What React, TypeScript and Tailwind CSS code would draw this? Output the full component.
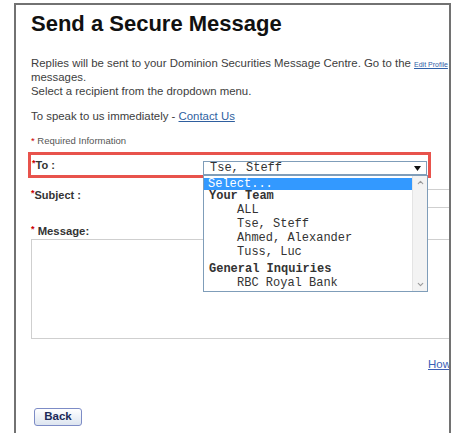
import { ChevronDown, ChevronUp } from 'lucide-react';

const teamMembers = ['ALL', 'Tse, Steff', 'Ahmed, Alexander', 'Tuss, Luc'];

const Required = () => <span className="text-[#cc0000] text-[9px] align-top leading-none">*</span>;

// open state of the "To" select, drawn as a native-looking listbox
const RecipientList = () => (
  <div className="absolute left-0 top-full z-10 w-[225px] h-[117px] border border-[#7f9db9] bg-white flex font-['Liberation_Mono',monospace] text-[12px] text-[#333]">
    <div className="flex-1 pt-[2px]">
      <div className="h-[12px] leading-[12px] bg-[#3399ff] text-white pl-[4px]">Select...</div>
      <div className="h-[13px] leading-[13px] pl-[5px] font-bold">Your Team</div>
      {teamMembers.map((name) => (
        <div key={name} className="h-[14px] leading-[14px] pl-[33px]">
          {name}
        </div>
      ))}
      <div className="h-[17px] leading-[13px] pt-[4px] pl-[5px] font-bold">General Inquiries</div>
      <div className="h-[14px] leading-[14px] pl-[33px]">RBC Royal Bank</div>
    </div>
    <div className="w-[15px] bg-[#f3f3f3] border-l border-[#e4e4e4] flex flex-col justify-between items-center py-[2px] text-[#9a9a9a]">
      <ChevronUp size={9} strokeWidth={3} />
      <ChevronDown size={9} strokeWidth={3} />
    </div>
  </div>
);

const App = () => {
  return (
    <div className="w-[458px] h-[433px] bg-white pl-[14px] pt-[3px] overflow-hidden font-['Liberation_Sans',Arial,sans-serif]">
      <div className="w-[437px] h-[430px] border-2 border-b-0 border-[#727272] overflow-hidden pl-[15px]">
        <div className="w-[520px]">
          <h1 className="mt-[6px] text-[22px] leading-[25px] font-bold text-[#111]">Send a Secure Message</h1>

          <div className="mt-[21px] text-[11.4px] leading-[12px] text-[#3d3d3d]">
            <p className="whitespace-nowrap">
              Replies will be sent to your Dominion Securities Message Centre. Go to the{' '}
              <a className="text-[7px] text-[#3060a8] underline">Edit Profile</a> page to set up notifications of new
            </p>
            <p>messages.</p>
            <p className="mt-[2px]">Select a recipient from the dropdown menu.</p>
            <p className="mt-[13px]">
              To speak to us immediately - <a className="text-[#2f5f9f] underline">Contact Us</a>
            </p>
          </div>

          <p className="mt-[13px] text-[9.5px] leading-[11px] text-[#555]">
            <span className="text-[#cc0000]">*</span> Required Information
          </p>

          <div className="mt-[6px] -ml-[3px] w-[403px] h-[26px] border-[3px] border-[#e8534c] flex">
            <div className="w-[172px] pl-[1px] pt-[4px] text-[11px] leading-[13px] font-bold text-[#333]">
              <Required />
              To :
            </div>
            <div className="relative mt-[6px] w-[224px] h-[14px]">
              <div className="h-full border border-[#7f9db9] bg-white flex items-center justify-between pl-[6px] pr-[5px] font-['Liberation_Mono',monospace] text-[12px] text-[#333]">
                <span className="leading-none">Tse, Steff</span>
                <svg width="7" height="5" viewBox="0 0 7 5">
                  <path d="M0 0h7L3.5 5z" fill="#111" />
                </svg>
              </div>
              <RecipientList />
            </div>
          </div>

          <div className="mt-[11px] flex h-[19px]">
            <div className="w-[172px] text-[11px] leading-[13px] font-bold text-[#333]">
              <Required />
              Subject :
            </div>
            <div className="w-[300px] h-[19px] border border-[#cfcfcf] bg-white" />
          </div>

          <p className="mt-[17px] text-[11.3px] leading-[12px] font-bold text-[#333]">
            <Required /> Message:
          </p>
          <div className="mt-[2px] w-[480px] h-[100px] border border-[#cfcfcf] bg-white" />

          <div className="mt-[19px] ml-[397px] text-[11.5px] leading-[12px] whitespace-nowrap">
            <a className="text-[#3b5fb5] underline">How do I send a secure message?</a>
          </div>

          <button className="block mt-[38px] ml-[3px] w-[48px] h-[18px] rounded-[3px] border border-[#7d8cc6] bg-gradient-to-b from-white to-[#dde5f0] text-[11.5px] leading-none font-bold text-[#1c2a58]">
            Back
          </button>
        </div>
      </div>
    </div>
  );
};

export default App;
